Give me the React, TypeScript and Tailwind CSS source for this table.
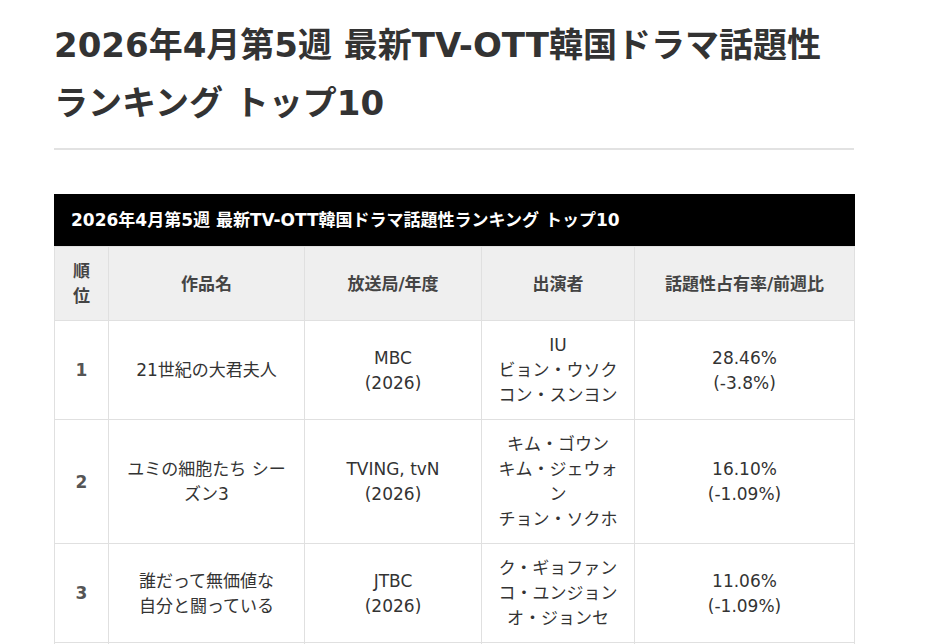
const font = { fontFamily: '"DejaVu Sans", "Noto Sans CJK JP", sans-serif' };

const columns = ["順位", "作品名", "放送局/年度", "出演者", "話題性占有率/前週比"];

const rows = [
  {
    rank: "1",
    title: ["21世紀の大君夫人"],
    station: ["MBC", "(2026)"],
    cast: ["IU", "ビョン・ウソク", "コン・スンヨン"],
    share: ["28.46%", "(-3.8%)"],
  },
  {
    rank: "2",
    title: ["ユミの細胞たち シーズン3"],
    station: ["TVING, tvN", "(2026)"],
    cast: ["キム・ゴウン", "キム・ジェウォン", "チョン・ソクホ"],
    share: ["16.10%", "(-1.09%)"],
  },
  {
    rank: "3",
    title: ["誰だって無価値な", "自分と闘っている"],
    station: ["JTBC", "(2026)"],
    cast: ["ク・ギョファン", "コ・ユンジョン", "オ・ジョンセ"],
    share: ["11.06%", "(-1.09%)"],
  },
  {
    rank: "4",
    title: [""],
    station: [""],
    cast: [""],
    share: [""],
  },
];

function Lines({ items }: { items: string[] }) {
  return (
    <>
      {items.map((t, i) => (
        <div key={i}>{t || "\u00a0"}</div>
      ))}
    </>
  );
}

export default function App() {
  return (
    <div className="min-h-screen bg-white text-[#333]" style={font}>
      <div className="w-[800px] ml-[54px]">
        {/* Page title */}
        <h1 className="pt-4 pb-4 text-[34px] leading-[58px] font-bold text-[#333] border-b-2 border-[#e2e2e2]">
          2026年4月第5週 最新TV-OTT韓国ドラマ話題性ランキング トップ10
        </h1>

        {/* Ranking table */}
        <table className="mt-[44px] w-[800px] table-fixed border-collapse text-[17px] leading-[25px]">
          <caption className="bg-black text-white font-bold text-left text-[17px] h-[52px] leading-[52px] px-[17px]">
            2026年4月第5週 最新TV-OTT韓国ドラマ話題性ランキング トップ10
          </caption>
          <colgroup>
            <col className="w-[54px]" />
            <col className="w-[196px]" />
            <col className="w-[177px]" />
            <col className="w-[153px]" />
            <col className="w-[220px]" />
          </colgroup>
          <thead>
            <tr className="bg-[#efefef]">
              {columns.map(c => (
                <th
                  key={c}
                  className="border border-[#e0e0e0] px-3 pt-3 pb-[11px] font-bold text-[#444] text-center align-middle"
                >
                  {c}
                </th>
              ))}
            </tr>
          </thead>
          <tbody>
            {rows.map(r => (
              <tr key={r.rank}>
                <td className="border border-[#e0e0e0] px-3 pt-3 pb-[11px] text-center align-middle font-bold text-[#555]">
                  {r.rank}
                </td>
                <td className="border border-[#e0e0e0] px-3 pt-3 pb-[11px] text-center align-middle">
                  <Lines items={r.title} />
                </td>
                <td className="border border-[#e0e0e0] px-3 pt-3 pb-[11px] text-center align-middle">
                  <Lines items={r.station} />
                </td>
                <td className="border border-[#e0e0e0] px-3 pt-3 pb-[11px] text-center align-middle">
                  <Lines items={r.cast} />
                </td>
                <td className="border border-[#e0e0e0] px-3 pt-3 pb-[11px] text-center align-middle">
                  <Lines items={r.share} />
                </td>
              </tr>
            ))}
          </tbody>
        </table>
      </div>
    </div>
  );
}
